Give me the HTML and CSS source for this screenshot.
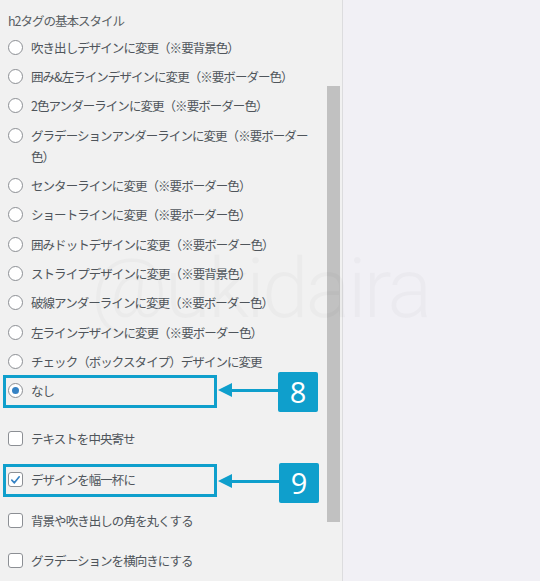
FILE: index.html
```html
<!DOCTYPE html>
<html lang="ja">
<head>
<meta charset="utf-8">
<link rel="stylesheet" href="styles.css">
</head>
<body>
<div class="page">
  <div class="left">
    <div class="content">
      <div class="heading">h2タグの基本スタイル</div>
      <div class="opt"><span class="radio"></span><span class="label">吹き出しデザインに変更（※要背景色）</span></div>
      <div class="opt"><span class="radio"></span><span class="label">囲み&amp;左ラインデザインに変更（※要ボーダー色）</span></div>
      <div class="opt"><span class="radio"></span><span class="label">2色アンダーラインに変更（※要ボーダー色）</span></div>
      <div class="opt"><span class="radio"></span><span class="label">グラデーションアンダーラインに変更（※要ボーダー色）</span></div>
      <div class="opt"><span class="radio"></span><span class="label">センターラインに変更（※要ボーダー色）</span></div>
      <div class="opt"><span class="radio"></span><span class="label">ショートラインに変更（※要ボーダー色）</span></div>
      <div class="opt"><span class="radio"></span><span class="label">囲みドットデザインに変更（※要ボーダー色）</span></div>
      <div class="opt"><span class="radio"></span><span class="label">ストライプデザインに変更（※要背景色）</span></div>
      <div class="opt"><span class="radio"></span><span class="label">破線アンダーラインに変更（※要ボーダー色）</span></div>
      <div class="opt"><span class="radio"></span><span class="label">左ラインデザインに変更（※要ボーダー色）</span></div>
      <div class="opt"><span class="radio"></span><span class="label">チェック（ボックスタイプ）デザインに変更</span></div>
      <div class="opt"><span class="radio checked"></span><span class="label">なし</span></div>

      <div class="checks">
        <div class="chk"><span class="box"></span><span class="label">テキストを中央寄せ</span></div>
        <div class="chk"><span class="box checked"><svg viewBox="0 0 14 14" width="14" height="14"><path d="M3 7.2 L5.8 10 L11 3.6" fill="none" stroke="#3582c4" stroke-width="1.8" stroke-linecap="round" stroke-linejoin="round"/></svg></span><span class="label">デザインを幅一杯に</span></div>
        <div class="chk"><span class="box"></span><span class="label">背景や吹き出しの角を丸くする</span></div>
        <div class="chk"><span class="box"></span><span class="label">グラデーションを横向きにする</span></div>
      </div>
    </div>
    <div class="scrollbar"><div class="thumb"></div></div>
  </div>
  <div class="right"></div>

  <div class="watermark">@ukidaira</div>

  <div class="hl hl8"></div>
  <div class="arrow arrow8"><span class="head"></span><span class="shaft"></span></div>
  <div class="badge badge8">8</div>

  <div class="hl hl9"></div>
  <div class="arrow arrow9"><span class="head"></span><span class="shaft"></span></div>
  <div class="badge badge9">9</div>
</div>
</body>
</html>
```

FILE: styles.css
```css
html, body {
  margin: 0;
  padding: 0;
}
body {
  width: 540px;
  height: 581px;
  overflow: hidden;
  font-family: "Noto Sans CJK JP", "Noto Sans", sans-serif;
  color: #4f555b;
}
.page {
  position: relative;
  display: flex;
  width: 540px;
  height: 581px;
  overflow: hidden;
}
.left {
  width: 342px;
  flex: none;
  display: flex;
  background: #f1f1f1;
  border-right: 1px solid #dcdcde;
}
.content {
  flex: 1;
  padding: 10px 0 0 8px;
}
.heading {
  font-size: 12.5px;
  letter-spacing: -1px;
  line-height: 21px;
  color: #5a5f64;
  margin-bottom: 5.5px;
}
.opt {
  display: flex;
  align-items: flex-start;
  line-height: 21px;
  margin-bottom: 8.36px;
}
.label {
  font-size: 12.5px;
  letter-spacing: -0.95px;
  line-height: 21px;
  max-width: 284px;
}
.radio {
  flex: none;
  width: 13px;
  height: 13px;
  border: 1px solid #8c8f94;
  border-radius: 50%;
  background: #fff;
  margin: 3px 8px 0 0;
  position: relative;
  box-sizing: content-box;
}
.radio.checked::after {
  content: "";
  position: absolute;
  left: 3px;
  top: 3px;
  width: 7px;
  height: 7px;
  border-radius: 50%;
  background: #3582c4;
}
.checks {
  padding-top: 18.5px;
  display: flex;
  flex-direction: column;
  gap: 19.7px;
}
.chk {
  display: flex;
  align-items: flex-start;
  line-height: 21px;
}
.box {
  flex: none;
  width: 13px;
  height: 13px;
  border: 1px solid #8c8f94;
  border-radius: 3px;
  background: #fff;
  margin: 3px 8px 0 0;
  display: flex;
  align-items: center;
  justify-content: center;
  box-sizing: content-box;
}
.box svg {
  display: block;
}
.scrollbar {
  width: 13px;
  flex: none;
  margin-right: 2px;
  padding-top: 86px;
}
.thumb {
  height: 436px;
  background: #c1c1c1;
}
.right {
  flex: 1;
  background: #f1f0f5;
}
.watermark {
  position: absolute;
  left: 91px;
  top: 239px;
  font-family: Roboto, "Open Sans", sans-serif;
  font-weight: 300;
  font-size: 84px;
  line-height: 100px;
  letter-spacing: -3px;
  color: rgba(0, 0, 0, 0.022);
  pointer-events: none;
  white-space: nowrap;
}
.hl {
  position: absolute;
  left: 3px;
  width: 208px;
  height: 27px;
  border: 3px solid #0f9fcc;
}
.hl8 { top: 375px; }
.hl9 { top: 464px; }
.arrow {
  position: absolute;
  left: 218px;
  width: 62px;
  height: 14px;
  display: flex;
  align-items: center;
}
.arrow8 { top: 383px; }
.arrow9 { top: 474px; }
.arrow .head {
  width: 0;
  height: 0;
  border-top: 7px solid transparent;
  border-bottom: 7px solid transparent;
  border-right: 14px solid #0f9fcc;
}
.arrow .shaft {
  flex: 1;
  height: 3px;
  background: #0f9fcc;
}
.badge {
  position: absolute;
  width: 40px;
  height: 40px;
  background: #0f9fcc;
  border-radius: 2px;
  color: #fff;
  font-family: "Open Sans", sans-serif;
  font-size: 29px;
  line-height: 40px;
  text-align: center;
}
.badge8 { left: 278px; top: 372px; }
.badge9 { left: 279px; top: 463px; }
```
